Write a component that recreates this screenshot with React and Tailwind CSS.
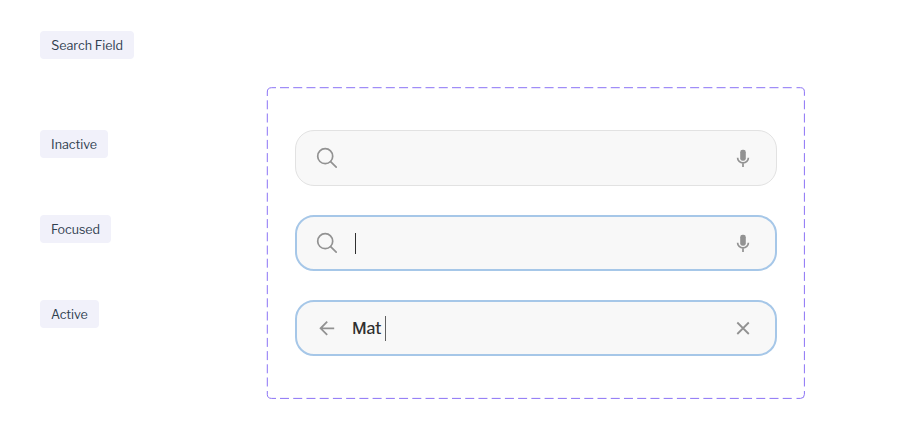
function Tag({ children, className }) {
  return (
    <div className={`flex h-7 items-center justify-center rounded bg-[#f1f1fa] pt-[3px] text-[12.5px] leading-none whitespace-nowrap text-[#304050] ${className}`}>
      {children}
    </div>
  );
}

function SearchIcon() {
  return (
    <svg className="size-6" viewBox="0 0 24 24" fill="none" stroke="#929292" strokeWidth="1.7" strokeLinecap="round">
      <circle cx="10.2" cy="10.2" r="7.5" />
      <path d="M15.6 15.7 21.2 21.2" />
    </svg>
  );
}

function MicIcon() {
  return (
    <svg className="size-6" viewBox="0 0 24 24" fill="none">
      <rect x="9.2" y="3.8" width="5.6" height="11" rx="2.4" fill="#929292" />
      <path d="M6.6 11.7a5.4 5.2 0 0 0 10.8 0M12 16.9v4" stroke="#929292" strokeWidth="1.7" />
    </svg>
  );
}

function BackIcon() {
  return (
    <svg className="size-6" viewBox="0 0 24 24" fill="none" stroke="#929292" strokeWidth="1.8">
      <path d="M19.2 12.3H5.4M12.2 5.7 5.6 12.3l6.6 6.6" />
    </svg>
  );
}

function CloseIcon() {
  return (
    <svg className="size-6" viewBox="0 0 24 24" fill="none" stroke="#929292" strokeWidth="1.8">
      <path d="m6.3 6.5 11.5 11.5M17.8 6.5 6.3 18" />
    </svg>
  );
}

function Field({ active, left, right, children }) {
  return (
    <div
      className={`flex h-[56px] w-[481.5px] items-center rounded-[19px] bg-[#f8f8f8] ${
        active ? "border-2 border-[#a6c7e8] pr-[20px] pl-[18px]" : "border border-[#e2e2e2] pr-[21px] pl-[19px]"
      }`}
    >
      {left}
      <div className="flex flex-1 items-center">{children}</div>
      {right}
    </div>
  );
}

function DashedFrame() {
  return (
    <svg className="pointer-events-none absolute inset-0 h-full w-full overflow-visible" viewBox="0 0 538 312" fill="none" stroke="#8b73f5">
      <path d="M13 .7H525M13 311.4H525" strokeDasharray="9 4.23" />
      <path d="M.3 13.3V300M537.4 13.3V300" strokeDasharray="9 4.2" />
      <path d="M.3 9V5Q.3.7 4.6.7H9M529.5.7h4q3.9 0 3.9 4.1v4M.3 304v3.4q0 4 4.3 4H9M529.5 311.4h4q3.9 0 3.9-4V304" />
    </svg>
  );
}

export default function App() {
  return (
    <main className="flex h-[444px] w-[906px] bg-white font-['Libre_Franklin',Inter,sans-serif]">
      <aside className="flex w-[267px] flex-col items-start pt-[31px] pl-10">
        <Tag className="w-[94px]">Search Field</Tag>
        <Tag className="mt-[71px] w-[68px]">Inactive</Tag>
        <Tag className="mt-[57px] w-[71px]">Focused</Tag>
        <Tag className="mt-[57px] w-[59px]">Active</Tag>
      </aside>
      <section className="relative mt-[87px] flex h-[312px] w-[538px] flex-col gap-[29px] pt-[43px] pl-7">
        <DashedFrame />
        <Field left={<SearchIcon />} right={<MicIcon />} />
        <Field active left={<SearchIcon />} right={<MicIcon />}>
          <span className="mt-px ml-4 h-[21px] w-px bg-[#303030]" />
        </Field>
        <Field active left={<BackIcon />} right={<CloseIcon />}>
          <span className="ml-[13px] pt-0.5 text-base leading-6 font-medium tracking-[-0.1px] text-[#303030]">Mat</span>
          <span className="ml-[3.5px] h-[25px] w-px bg-[#606060]" />
        </Field>
      </section>
    </main>
  );
}
